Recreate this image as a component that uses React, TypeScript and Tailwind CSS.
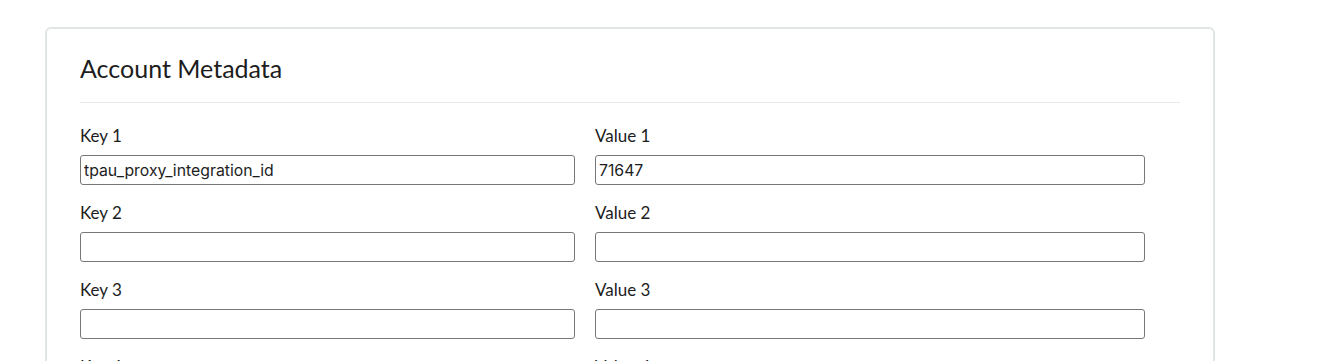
import React from "react";

const rows = [
  { k: "tpau_proxy_integration_id", v: "71647" },
  { k: "", v: "" },
  { k: "", v: "" },
  { k: "", v: "" },
];

export default function App() {
  return (
    <div className="bg-white pt-[27px] pl-[45px] overflow-hidden h-[361px]" style={{ fontFamily: "Lato, 'Noto Sans', sans-serif" }}>
      <div className="w-[1170px] rounded-[6px] border-2 border-[#e1e5e5] px-[33px] pt-[24px] pb-8">
        <h2 className="text-[25px] leading-[30px] text-[#1d1d1d] font-normal">Account Metadata</h2>
        <div className="mt-[19px] h-px bg-[#e8eaea]" />
        <div className="pt-[22px]">
          {rows.map((r, i) => (
            <div key={i} className="flex gap-[20px] mb-[17px]">
              <div className="w-[495px]">
                <label className="block text-[17px] leading-[22px] text-[#1d1d1d] mb-[8px]">Key {i + 1}</label>
                <input
                  readOnly
                  value={r.k}
                  className="block w-[495px] h-[30px] rounded-[3px] border border-[#777] px-[3px] text-[15.8px] text-[#1d1d1d] outline-none"
                  style={{ fontFamily: "Inter, 'Noto Sans', sans-serif" }}
                />
              </div>
              <div className="w-[550px]">
                <label className="block text-[17px] leading-[22px] text-[#1d1d1d] mb-[8px]">Value {i + 1}</label>
                <input
                  readOnly
                  value={r.v}
                  className="block w-[550px] h-[30px] rounded-[3px] border border-[#777] px-[3px] text-[15.8px] text-[#1d1d1d] outline-none"
                  style={{ fontFamily: "Inter, 'Noto Sans', sans-serif" }}
                />
              </div>
            </div>
          ))}
        </div>
      </div>
    </div>
  );
}
